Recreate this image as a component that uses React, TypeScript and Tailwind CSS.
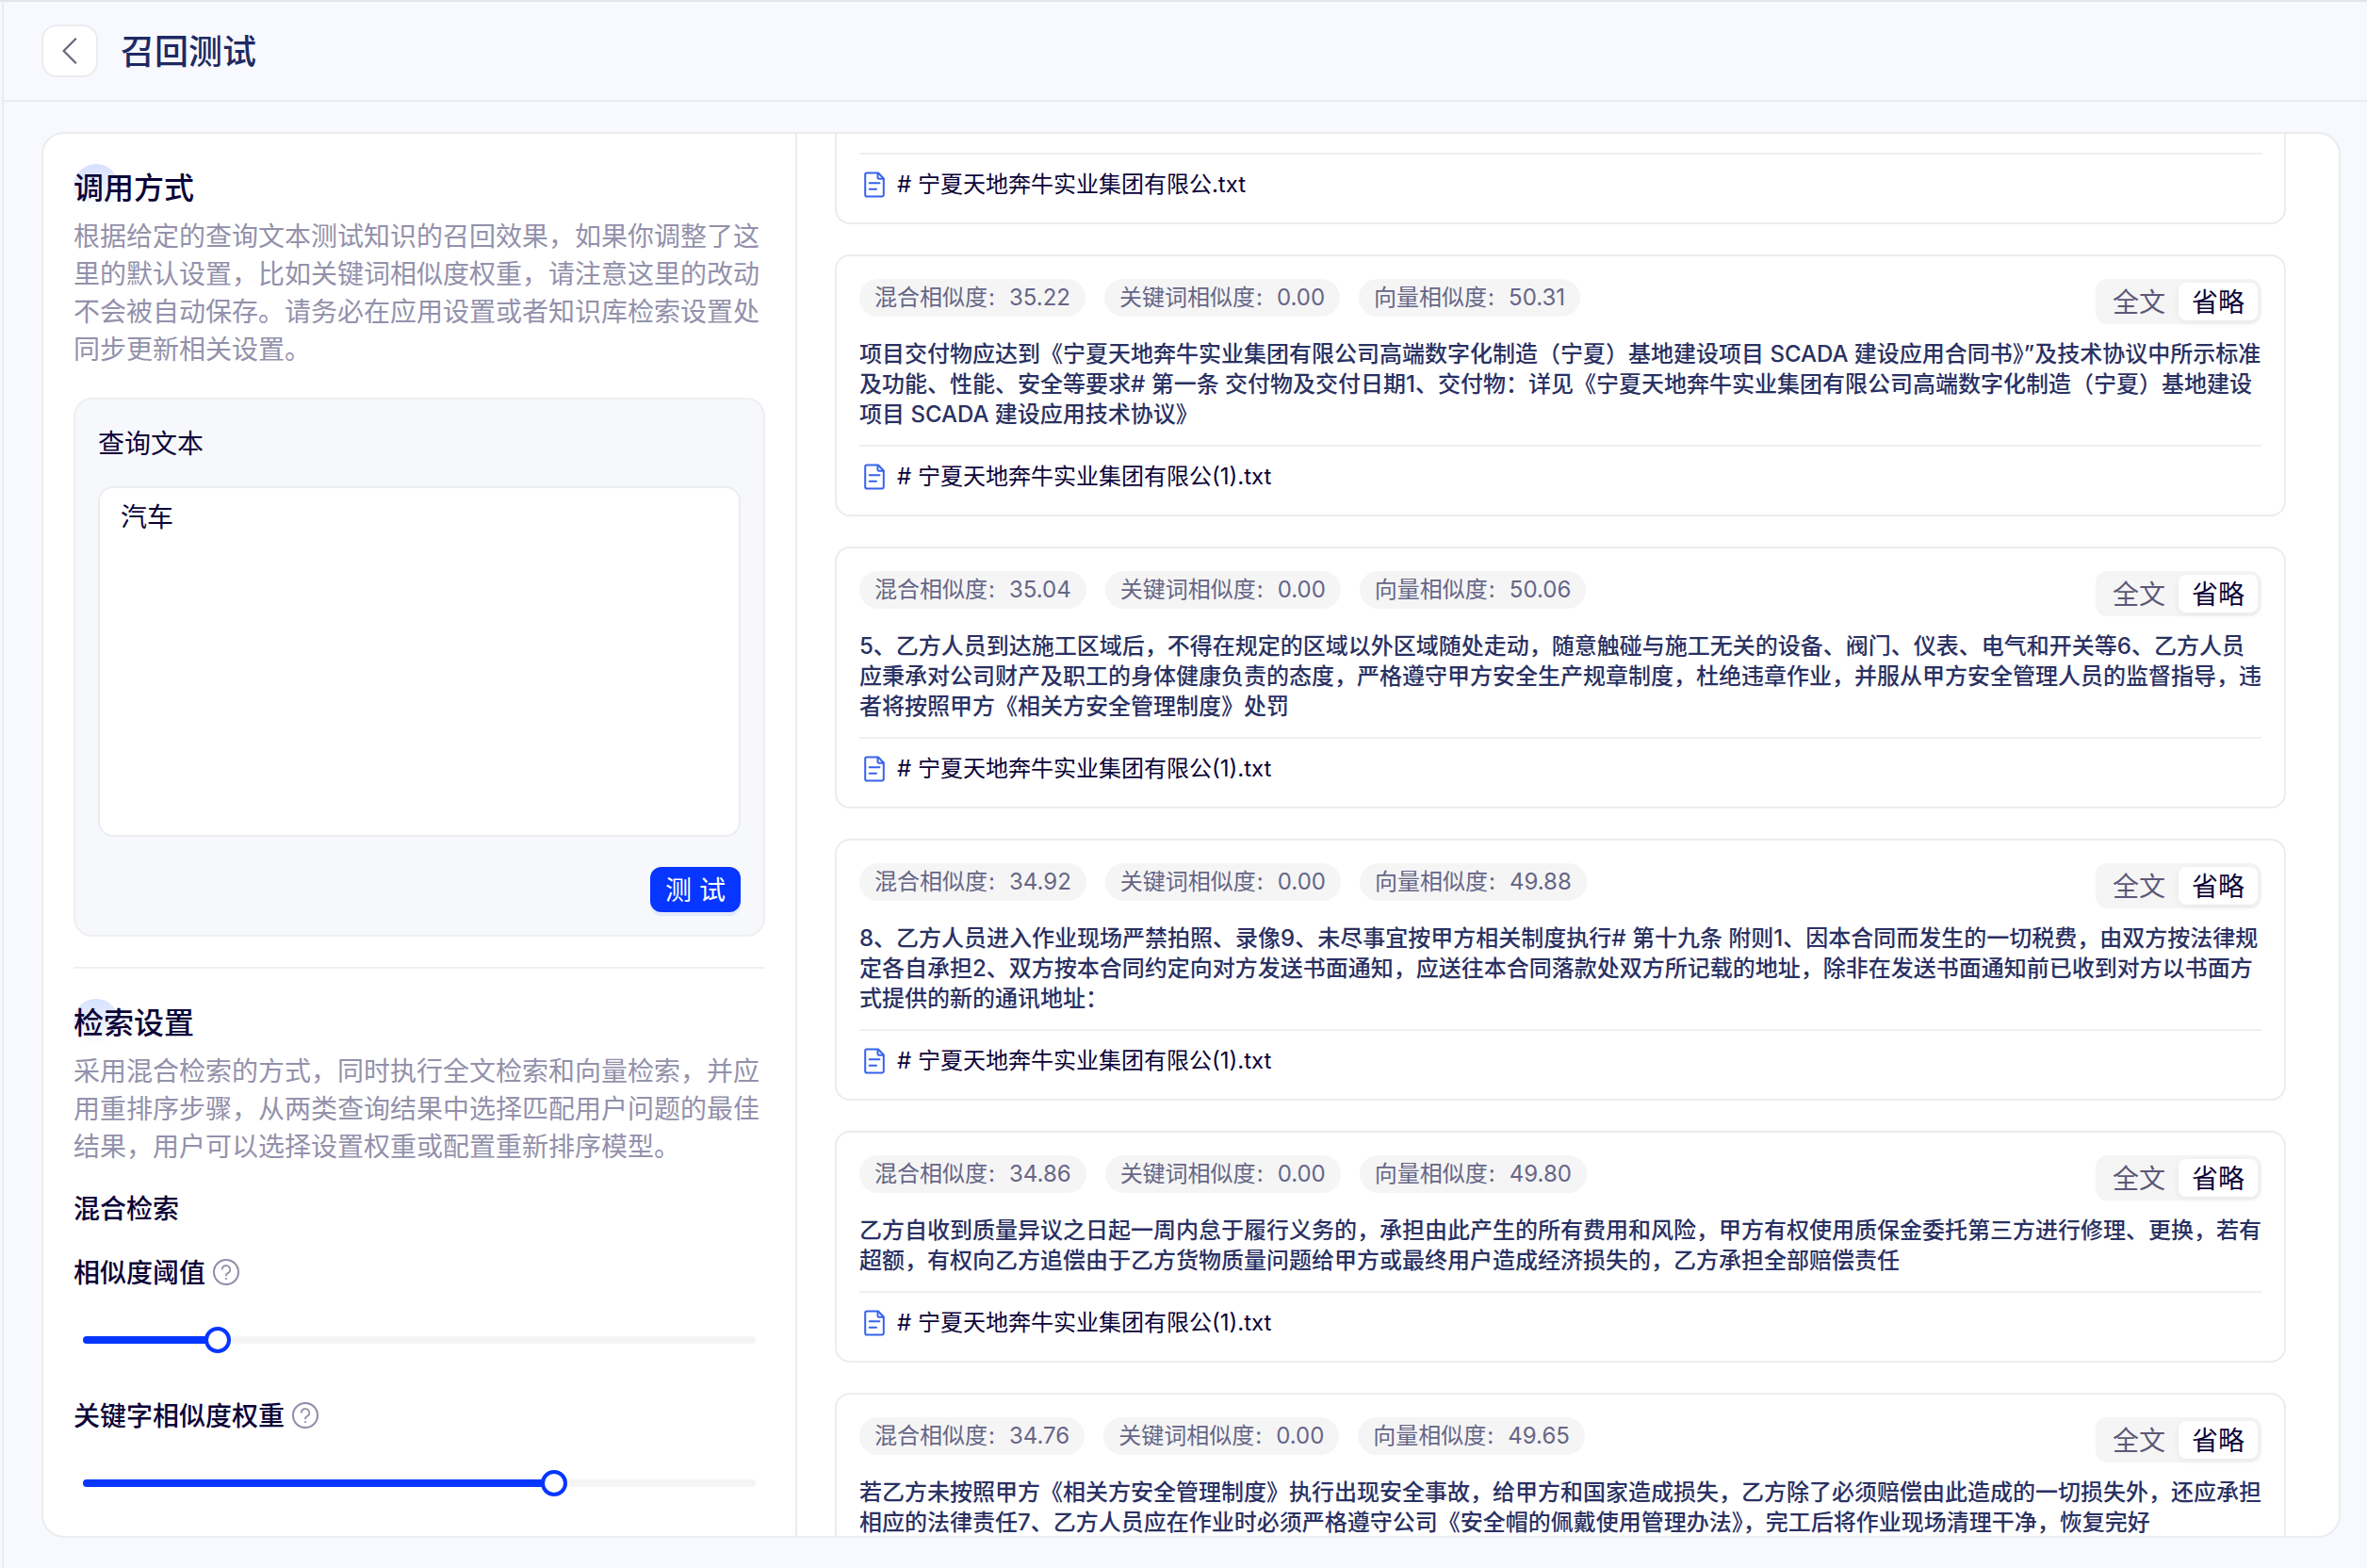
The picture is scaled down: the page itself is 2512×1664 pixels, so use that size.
type SearchResult = {
  mixed: string;
  keyword: string;
  vector: string;
  lines: string[];
  file: string;
};

const NUMBERED_FILE = "# 宁夏天地奔牛实业集团有限公(1).txt";

const results: SearchResult[] = [
  {
    mixed: "35.22",
    keyword: "0.00",
    vector: "50.31",
    lines: [
      "项目交付物应达到《宁夏天地奔牛实业集团有限公司高端数字化制造（宁夏）基地建设项目 SCADA 建设应用合同书》”及技术协议中所示标准",
      "及功能、性能、安全等要求# 第一条 交付物及交付日期1、交付物：详见《宁夏天地奔牛实业集团有限公司高端数字化制造（宁夏）基地建设",
      "项目 SCADA 建设应用技术协议》",
    ],
    file: NUMBERED_FILE,
  },
  {
    mixed: "35.04",
    keyword: "0.00",
    vector: "50.06",
    lines: [
      "5、乙方人员到达施工区域后，不得在规定的区域以外区域随处走动，随意触碰与施工无关的设备、阀门、仪表、电气和开关等6、乙方人员",
      "应秉承对公司财产及职工的身体健康负责的态度，严格遵守甲方安全生产规章制度，杜绝违章作业，并服从甲方安全管理人员的监督指导，违",
      "者将按照甲方《相关方安全管理制度》处罚",
    ],
    file: NUMBERED_FILE,
  },
  {
    mixed: "34.92",
    keyword: "0.00",
    vector: "49.88",
    lines: [
      "8、乙方人员进入作业现场严禁拍照、录像9、未尽事宜按甲方相关制度执行# 第十九条 附则1、因本合同而发生的一切税费，由双方按法律规",
      "定各自承担2、双方按本合同约定向对方发送书面通知，应送往本合同落款处双方所记载的地址，除非在发送书面通知前已收到对方以书面方",
      "式提供的新的通讯地址：",
    ],
    file: NUMBERED_FILE,
  },
  {
    mixed: "34.86",
    keyword: "0.00",
    vector: "49.80",
    lines: [
      "乙方自收到质量异议之日起一周内怠于履行义务的，承担由此产生的所有费用和风险，甲方有权使用质保金委托第三方进行修理、更换，若有",
      "超额，有权向乙方追偿由于乙方货物质量问题给甲方或最终用户造成经济损失的，乙方承担全部赔偿责任",
    ],
    file: NUMBERED_FILE,
  },
  {
    mixed: "34.76",
    keyword: "0.00",
    vector: "49.65",
    lines: [
      "若乙方未按照甲方《相关方安全管理制度》执行出现安全事故，给甲方和国家造成损失，乙方除了必须赔偿由此造成的一切损失外，还应承担",
      "相应的法律责任7、乙方人员应在作业时必须严格遵守公司《安全帽的佩戴使用管理办法》，完工后将作业现场清理干净，恢复完好",
    ],
    file: NUMBERED_FILE,
  },
];

function SectionTitle({ children }: { children: string }) {
  return (
    <h2 className="relative h-12 text-[32px] leading-[51px] font-medium text-[#0b0237]">
      <span className="absolute left-0 top-0 h-12 w-12 rounded-full bg-linear-to-b from-[#d6e1ff] to-white/0" />
      <span className="relative">{children}</span>
    </h2>
  );
}

function HelpIcon() {
  return (
    <svg
      aria-hidden="true"
      className="h-7 w-7 text-[#8f8ca8]"
      viewBox="0 0 28 28"
      fill="none"
      stroke="currentColor"
      strokeWidth={2}
    >
      <circle cx="14" cy="14" r="13" />
      <path
        d="M9.8 11.5a4.2 4.2 0 1 1 5.900 3.600c-1.100.5-1.700 1.100-1.700 2.200v1"
        strokeWidth={1.7}
      />
      <circle cx="14" cy="21" r="1.100" fill="currentColor" stroke="none" />
    </svg>
  );
}

function FileIcon() {
  return (
    <svg
      aria-hidden="true"
      className="h-8 w-8 text-[#3763ea]"
      viewBox="0 0 32 32"
      fill="none"
      stroke="currentColor"
      strokeWidth={2}
      strokeLinejoin="round"
      strokeLinecap="round"
    >
      <path d="M20 3.500H8A1.800 1.800 0 0 0 6.200 5.300v21.500A1.800 1.800 0 0 0 8 28.600h16a1.800 1.800 0 0 0 1.800-1.800V9.500z" />
      <path d="M19.500 4v4.200A1.500 1.500 0 0 0 21 9.700h4.500" />
      <path d="M10.700 14.200h10.700M10.700 20.700h7.300" />
    </svg>
  );
}

function Slider({ label, value }: { label: string; value: number }) {
  return (
    <div>
      <div className="flex h-11 items-center gap-2">
        <span className="pt-0.5 text-[28px] font-medium text-[#0b0237]">
          {label}
        </span>
        <HelpIcon />
      </div>
      <div className="mx-2.5 mt-[46px] h-2 rounded-full bg-[#f5f5f5]">
        <div
          className="relative h-2 rounded-full bg-[#0636ff]"
          style={{ width: `${value}%` }}
        >
          <span className="absolute -right-3.5 -top-2.5 h-7 w-7 rounded-full border-4 border-[#0636ff] bg-white" />
        </div>
      </div>
    </div>
  );
}

function Chip({ label, value }: { label: string; value: string }) {
  return (
    <div className="flex h-10 items-center rounded-full bg-[#f5f5f5] px-4 text-2xl whitespace-nowrap text-[#666687]">
      <span>{label}</span>
      <span className="w-[23px] pl-px">:</span>
      <span>{value}</span>
    </div>
  );
}

function ViewToggle() {
  return (
    <div className="flex h-12 rounded-xl bg-[#f5f5f5] p-1 text-[28px] leading-10">
      <button type="button" className="w-[84px] pt-px text-[#5c5878]">
        全文
      </button>
      <button
        type="button"
        className="w-[84px] rounded-lg bg-white pt-px text-[#0b0237] shadow-[0_2px_8px_rgba(0,0,0,0.06)]"
      >
        省略
      </button>
    </div>
  );
}

function FileRow({ name }: { name: string }) {
  return (
    <div className="mt-4 flex h-8 items-center gap-2 text-2xl text-[#0b0237]">
      <FileIcon />
      <span>{name}</span>
    </div>
  );
}

function TextLines({ lines }: { lines: string[] }) {
  return (
    <div className="text-2xl leading-8 font-medium whitespace-nowrap text-[#2a3163]">
      {lines.map((line) => (
        <p key={line}>{line}</p>
      ))}
    </div>
  );
}

function ResultCard({ result }: { result: SearchResult }) {
  return (
    <article className="shrink-0 rounded-2xl border-2 border-[#ebecf0] bg-white p-6">
      <div className="mb-4 flex h-12 items-start justify-between">
        <div className="flex gap-5">
          <Chip label="混合相似度" value={result.mixed} />
          <Chip label="关键词相似度" value={result.keyword} />
          <Chip label="向量相似度" value={result.vector} />
        </div>
        <ViewToggle />
      </div>
      <TextLines lines={result.lines} />
      <div className="mt-4 border-t-2 border-[#f0f0f0]" />
      <FileRow name={result.file} />
    </article>
  );
}

export default function App() {
  return (
    <div className="flex h-[1664px] w-[2512px] overflow-hidden border-t-2 border-[#e4e5ea] bg-[#f8f9fe] font-[Inter,'Noto_Sans_CJK_SC',sans-serif]">
      <div className="ml-0.5 flex min-w-0 flex-1 flex-col border-l-2 border-[#ebecf0]">
        <header className="flex h-[106px] shrink-0 items-center gap-6 border-b-2 border-[#ebecf0] pl-10">
          <button
            type="button"
            className="flex h-14 w-[60px] items-center justify-center rounded-2xl border-2 border-[#ebecf0] bg-white"
          >
            <svg
              aria-hidden="true"
              className="h-8 w-8"
              viewBox="0 0 32 32"
              fill="none"
              stroke="#66677a"
              strokeWidth={2.2}
            >
              <path d="M22.800 2.800 9.600 16l13.200 13.200" />
            </svg>
          </button>
          <h1 className="pt-0.5 text-4xl font-medium text-[#1f2a62]">
            召回测试
          </h1>
        </header>

        <main className="my-8 mr-7 ml-10 flex min-h-0 flex-1 overflow-hidden rounded-3xl border-2 border-[#ebecf0] bg-white">
          <section className="w-[800px] shrink-0 border-r-2 border-[#ebecf0] px-8 pt-8">
            <SectionTitle>调用方式</SectionTitle>
            <div className="mt-[9px] text-[28px] leading-10 whitespace-nowrap text-[#9391ab]">
              <p>根据给定的查询文本测试知识的召回效果，如果你调整了这</p>
              <p>里的默认设置，比如关键词相似度权重，请注意这里的改动</p>
              <p>不会被自动保存。请务必在应用设置或者知识库检索设置处</p>
              <p>同步更新相关设置。</p>
            </div>

            <div className="mt-[31px] h-[572px] rounded-[20px] border-2 border-[#efeff1] bg-[#f7f8fc] px-6 pt-[25px] text-[28px] text-[#0b0237]">
              <div className="leading-[44px]">查询文本</div>
              <div className="mt-[23px] h-[372px] rounded-2xl border-2 border-[#ebecf0] bg-white px-[22px] py-[11px] leading-10">
                汽车
              </div>
              <div className="mt-8 flex justify-end">
                <button
                  type="button"
                  className="h-12 w-24 rounded-xl bg-[#0636ff] pt-px text-white shadow-[0_4px_0_rgba(5,80,255,0.08)]"
                >
                  测 试
                </button>
              </div>
            </div>

            <div className="my-8 border-t-2 border-[#f0f0f0]" />

            <SectionTitle>检索设置</SectionTitle>
            <div className="mt-[9px] text-[28px] leading-10 whitespace-nowrap text-[#9391ab]">
              <p>采用混合检索的方式，同时执行全文检索和向量检索，并应</p>
              <p>用重排序步骤，从两类查询结果中选择匹配用户问题的最佳</p>
              <p>结果，用户可以选择设置权重或配置重新排序模型。</p>
            </div>
            <h3 className="mt-6 text-[28px] leading-[44px] font-medium text-[#0b0237]">
              混合检索
            </h3>
            <div className="mt-[23px] flex flex-col gap-[54px]">
              <Slider label="相似度阈值" value={20} />
              <Slider label="关键字相似度权重" value={70} />
            </div>
          </section>

          <section className="flex min-w-0 flex-1 flex-col gap-8 pr-14 pl-10">
            <article className="h-24 shrink-0 rounded-b-2xl border-2 border-t-0 border-[#ebecf0] bg-white px-6 pt-5">
              <div className="border-t-2 border-[#f0f0f0]" />
              <FileRow name="# 宁夏天地奔牛实业集团有限公.txt" />
            </article>
            {results.map((result) => (
              <ResultCard key={result.mixed} result={result} />
            ))}
          </section>
        </main>
      </div>
    </div>
  );
}
